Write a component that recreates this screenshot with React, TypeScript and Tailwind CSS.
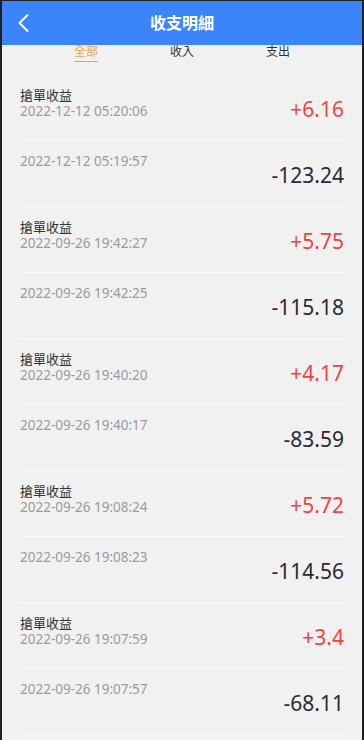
import React from "react";

type Row = { title?: string; time: string; amount: string; income: boolean };

const rows: Row[] = [
  { title: "搶單收益", time: "2022-12-12 05:20:06", amount: "+6.16", income: true },
  { time: "2022-12-12 05:19:57", amount: "-123.24", income: false },
  { title: "搶單收益", time: "2022-09-26 19:42:27", amount: "+5.75", income: true },
  { time: "2022-09-26 19:42:25", amount: "-115.18", income: false },
  { title: "搶單收益", time: "2022-09-26 19:40:20", amount: "+4.17", income: true },
  { time: "2022-09-26 19:40:17", amount: "-83.59", income: false },
  { title: "搶單收益", time: "2022-09-26 19:08:24", amount: "+5.72", income: true },
  { time: "2022-09-26 19:08:23", amount: "-114.56", income: false },
  { title: "搶單收益", time: "2022-09-26 19:07:59", amount: "+3.4", income: true },
  { time: "2022-09-26 19:07:57", amount: "-68.11", income: false },
];

export default function App() {
  return (
    <div
      className="w-[364px] min-h-[740px] bg-[#f1f1f1] border-l-2 border-r-2 border-t border-[#1f2023] overflow-hidden"
      style={{ fontFamily: "'Noto Sans', 'Noto Sans CJK TC', sans-serif" }}
    >
      <div className="relative h-[44px] bg-[#3a85fa] flex items-center justify-center">
        <svg
          className="absolute left-[15px] top-[12px]"
          width="14"
          height="20"
          viewBox="0 0 14 20"
          fill="none"
        >
          <polyline
            points="10.5,2 2.5,10 10.5,18"
            stroke="white"
            strokeWidth="2"
            strokeLinecap="round"
            strokeLinejoin="round"
          />
        </svg>
        <div className="text-white text-[16px] font-bold leading-[20px]">收支明細</div>
      </div>
      <div className="w-[288px] mx-auto grid grid-cols-3 h-[30px]">
        <div className="flex justify-center">
          <div className="text-[12px] leading-[14px] text-[#f0a24a] border-b border-[#f0a24a] pb-[2px] h-[17px]">全部</div>
        </div>
        <div className="flex justify-center">
          <div className="text-[12px] leading-[14px] text-[#333]">收入</div>
        </div>
        <div className="flex justify-center">
          <div className="text-[12px] leading-[14px] text-[#333]">支出</div>
        </div>
      </div>
      <div>
        {rows.map((r, i) => (
          <div
            key={i}
            className="mx-[18px] h-[66px] border-b border-[#fbfbfb] flex justify-between"
          >
            <div className="pt-[12px] flex flex-col">
              {r.title && (
                <div className="text-[13px] leading-[16px] text-[#333]">{r.title}</div>
              )}
              <div className="text-[13.5px] leading-[16px] text-[#9a9a9a]">{r.time}</div>
            </div>
            <div className="pt-[22px]">
              <div
                className={
                  "text-[21px] leading-[24px] " +
                  (r.income ? "text-[#f0443f]" : "text-[#2a2a33]")
                }
              >
                {r.amount}
              </div>
            </div>
          </div>
        ))}
      </div>
    </div>
  );
}
